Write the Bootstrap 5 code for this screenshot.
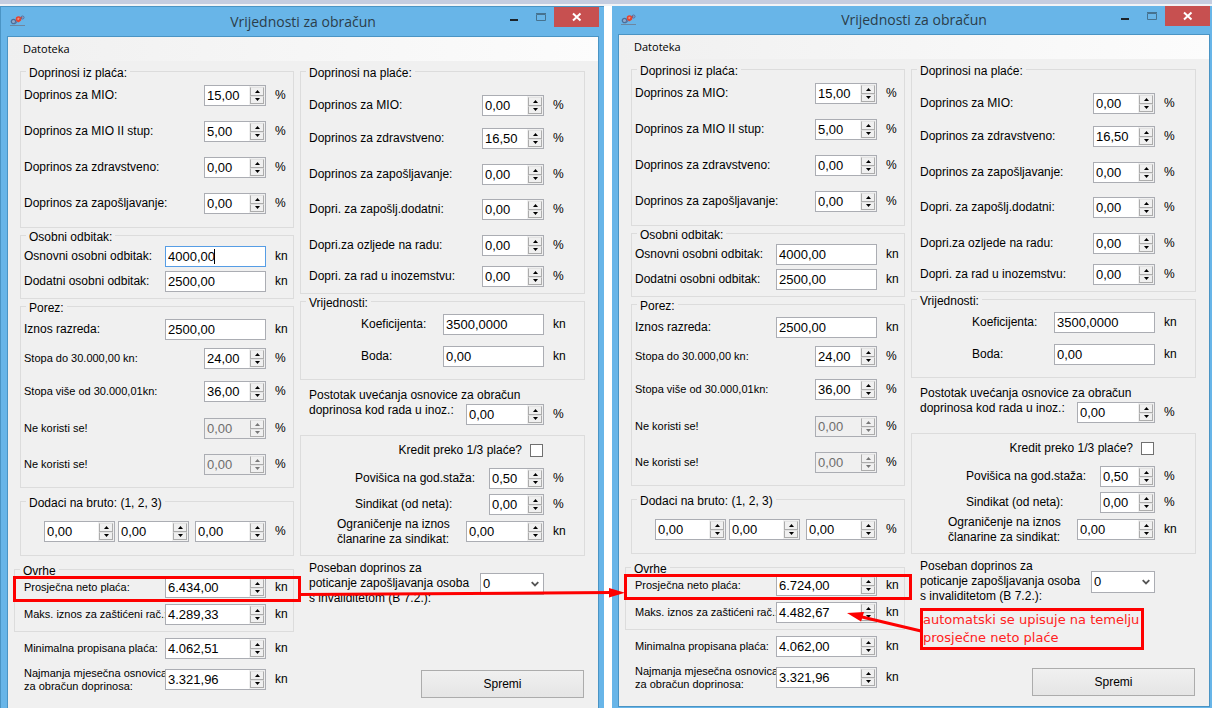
<!DOCTYPE html>
<html lang="hr">
<head>
<meta charset="utf-8">
<meta name="viewport" content="width=device-width, initial-scale=1">
<title>Vrijednosti za obračun</title>
<link href="https://cdn.jsdelivr.net/npm/bootstrap@5.3.0/dist/css/bootstrap.min.css" rel="stylesheet">
<style>
:root { --sky:#68b5e8; --edge:#4a94c4; --line:#dcdcdc; --face:#f0f0f0; --alert:#fe0000; }
body { background:#fff; color:#000; font:12px/15px "Liberation Sans", Arial, sans-serif; }
.topstrip { height:6px; background:#c5cde0; border-bottom:2px solid #f2f3f6; }
.desk { display:grid; grid-template-columns:604fr 600fr; column-gap:8px; align-items:start; }
.win { background:var(--sky); min-width:0; }
.win-a { padding:0 6px 0 8px; border-top:1px solid var(--edge); box-shadow:inset 1px 0 var(--edge); }
.win-b { padding:0 3px 2px 7px; }
.titlebar { height:29px; margin-bottom:1px; }
.win-b .titlebar { height:28px; }
.caption { font:14px/30px "Open Sans", "Noto Sans", sans-serif; color:#2b3d4a; }
.win-b .caption { line-height:28px; }
.appicon { left:2px; top:8px; }
.winbtns { right:-1px; top:0; }
.winbtns button { border:0; padding:0; height:20px; background:none; display:block; }
.winbtns .shut { width:45px; background:#c75050; }
.winbtns .tool { width:27px; }
.client { background:var(--face); outline:1px solid var(--edge); padding-bottom:10px; }
.menustrip { height:24px; background:linear-gradient(90deg,#f0f0f0,#fcfcfc); padding-left:15px; }
.menustrip a { font:11px/24px "Open Sans", "Noto Sans", sans-serif; color:#000; text-decoration:none; }
.panes { display:grid; grid-template-columns:274fr 285fr; column-gap:6px; padding:3px 13px 0 12px; }
.panes > div { min-width:0; }
fieldset.box { border:1px solid var(--line); min-width:0; }
fieldset.box > legend { float:none; width:auto; height:14px; margin:0 0 0 5px; padding:2px 3px 0; font-size:12px; line-height:14px; overflow:visible; white-space:nowrap; }
.field { display:flex; align-items:center; height:21px; padding-left:3px; white-space:nowrap; }
.wide { margin-left:-6px; }
.wide .field { padding-left:9px; }
.field.tall { align-items:flex-end; height:37px; }
.field.tri { height:45px; }
.field > label { flex:1 1 0; min-width:0; }
.tight { font-size:11px; line-height:13px; }
.tall > label { padding-bottom:7px; }
.unit { width:27px; padding-left:9px; flex:none; line-height:21px; }
.lhs > .field { padding-left:4px; }
.lhs > .field .unit { width:28px; }
.rhs .unit { width:40px; }
.rhs .field { padding-left:8px; }
.rhs > .field { padding-left:9px; }
.rhs > .field .unit { width:41px; }
.rhs .in1 { padding-left:28px; } .rhs .in2 { padding-left:46px; } .rhs .in3 { padding-left:52px; }
.ctl { height:21px; border:1px solid #abadb3; background:#fff; display:flex; flex:none; }
.ctl input { border:0; outline:0; background:none; padding:0 0 0 2px; color:#000; width:100%; min-width:0; font-size:13px; line-height:15px; }
.ctl.hot { border-color:#569de5; }
.ctl.hot input { background:linear-gradient(#000,#000) 48px 2px / 1px 15px no-repeat; }
.ctl.off { background:var(--face); }
.ctl.off input { color:#6d6d6d; }
.ctl.off svg { opacity:.5; }
.w55 { width:55px; } .w62 { width:62px; } .w71 { width:71px; } .w78 { width:78px; } .w101 { width:101px; }
.g3 { margin-right:3px; } .g6 { margin-right:6px; }
.spin { width:16px; flex:none; background:#f0f0f0; padding:1px; display:flex; flex-direction:column; }
.spin button { flex:1; border:1px solid #acacac; border-top-color:#e3e3e3; background:#f0f0f0; padding:0; display:flex; align-items:center; justify-content:center; min-height:0; }
.field select { width:64px; height:22px; border:1px solid #abadb3; border-radius:0; padding:0 2px; font-size:13px; color:#000; appearance:none; background:#fff url("data:image/svg+xml,%3Csvg xmlns='http://www.w3.org/2000/svg' width='8' height='6'%3E%3Cpath d='M.7 1.2 4 4.500 7.300 1.200' fill='none' stroke='%23555' stroke-width='1.800'/%3E%3C/svg%3E") right 4px center no-repeat; }
.field input[type=checkbox] { width:13px; height:13px; margin:0 1px 0 0; border:1px solid #707070; background:#fff; appearance:none; }
.t1{margin-top:1px}.t4{margin-top:4px}.t5{margin-top:5px}.t6{margin-top:6px}.t7{margin-top:7px}.t8{margin-top:8px}.t10{margin-top:10px}.t11{margin-top:11px}.t12{margin-top:12px}.t13{margin-top:13px}.t14{margin-top:14px}.t15{margin-top:15px}.t16{margin-top:16px}.t17{margin-top:17px}
.b6{padding-bottom:6px}.b12{padding-bottom:12px}.b13{padding-bottom:13px}
.save { width:163px; height:28px; margin:64px 1px 0 0; border:1px solid #acacac; border-radius:0; background:linear-gradient(#f0f0f0,#e5e5e5); color:#000; font-size:12px; padding:0; }
.marked { position:relative; }
.marked::after { content:""; position:absolute; inset:-1px -8px -4px -2px; border:3px solid var(--alert); pointer-events:none; }
.arrows { inset:0; width:100%; pointer-events:none; }
.callout { right:68px; top:608px; width:224px; border:3px solid var(--alert); background:var(--face); color:#f22; font:13px/18px "DejaVu Sans", Verdana, sans-serif; white-space:nowrap; }
</style>
</head>
<body>
<div class="position-relative overflow-hidden">
  <div class="topstrip"></div>
  <main class="desk" id="desk"></main>
  <p class="callout position-absolute mb-0">automatski se upisuje na temelju<br>prosječne neto plaće</p>
  <svg class="arrows position-absolute" viewBox="0 0 1212 708" aria-hidden="true">
    <path d="M301 594.500 612 592.500" stroke="#fe0000" stroke-width="3"/>
    <path d="M609 588v9.500l16-4.800z" fill="#fe0000"/>
    <path d="M860 616.500 921 631" stroke="#fe0000" stroke-width="3"/>
    <path d="M847 613l17-1-3 9.500z" fill="#fe0000"/>
  </svg>
</div>
<script src="https://cdn.jsdelivr.net/npm/bootstrap@5.3.0/dist/js/bootstrap.bundle.min.js"></script>
<script>
let n = 0;
const arrow = d => `<svg width="5" height="3" viewBox="0 0 5 3" aria-hidden="true"><path d="${d}"/></svg>`;
const spinner = off => `<span class="spin"><button type="button" tabindex="-1" aria-label="Više" ${off}>${arrow('M0 3h5L2.500 0z')}</button><button type="button" tabindex="-1" aria-label="Manje" ${off}>${arrow('M0 0h5L2.500 3z')}</button></span>`;
// o: w = width class, plain = no arrows, lab = label classes, unit, off, hot
function control(value, o, attrs) {
  const off = o.off ? 'disabled' : '';
  return `<span class="ctl ${o.w || 'w62'} ${off && 'off'} ${o.hot ? 'hot' : ''}"><input type="text" ${attrs} value="${value}" ${off}>${o.plain ? '' : spinner(off)}</span>`;
}
function field(label, value, cls, o = {}) {
  const id = 'f' + (++n);
  return `<div class="field ${cls}"><label for="${id}" class="${o.lab || ''}">${label}</label>${control(value, o, `id="${id}"`)}<span class="unit">${o.unit || '%'}</span></div>`;
}
const box = (title, body, cls = '') => `<fieldset class="box ${cls}">${title ? `<legend>${title}</legend>` : ''}${body}</fieldset>`;
const money = { w: 'w101', plain: true, unit: 'kn' };
const amount = { w: 'w101', unit: 'kn', lab: 'tight' };
const small = { lab: 'tight' };

function form(d) {
  const left =
    box('Doprinosi iz plaća:',
      field('Doprinos za MIO:', '15,00', 't7') + field('Doprinos za MIO II stup:', '5,00', 't15') +
      field('Doprinos za zdravstveno:', '0,00', 't15') + field('Doprinos za zapošljavanje:', '0,00', 't15'), 'b13') +
    box('Osobni odbitak:',
      field('Osnovni osobni odbitak:', '4000,00', 't4', { ...money, hot: d.hot }) +
      field('Dodatni osobni odbitak:', '2500,00', 't4', money), 'b6') +
    box('Porez:',
      field('Iznos razreda:', '2500,00', 't6', money) + field('Stopa do 30.000,00 kn:', '24,00', 't8', small) +
      field('Stopa više od 30.000,01kn:', '36,00', 't12', small) + field('Ne koristi se!', '0,00', 't16', { ...small, off: true }) +
      field('Ne koristi se!', '0,00', 't15', { ...small, off: true }), 'b12') +
    box('Dodaci na bruto: (1, 2, 3)',
      `<div class="field t13 justify-content-end">` +
      ['g3', 'g6', ''].map((g, i) => control('0,00', { w: 'w71 ' + g }, `aria-label="Dodatak ${i + 1}"`)).join('') +
      `<span class="unit">%</span></div>`, 't6 b13') +
    box('Ovrhe',
      field('Prosječna neto plaća:', d.avg, 't1 marked', amount) +
      field('Maks. iznos za zaštićeni rač.:', d.max, 't6', amount), 't6 wide b6') +
    field('Minimalna propisana plaća:', d.min, 't6', amount) +
    field('Najmanja mjesečna osnovica<br>za obračun doprinosa:', '3.321,96', 't10', amount);
  const right =
    box('Doprinosi na plaće:',
      field('Doprinos za MIO:', '0,00', 't17') + field('Doprinos za zdravstveno:', '16,50', 't12') +
      field('Doprinos za zapošljavanje:', '0,00', 't15') + field('Dopri. za zapošlj.dodatni:', '0,00', 't14') +
      field('Dopri.za ozljede na radu:', '0,00', 't15') + field('Dopri. za rad u inozemstvu:', '0,00', 't10'), 'b6') +
    box('Vrijednosti:',
      field('Koeficijenta:', '3500,0000', 't6', { ...money, lab: 'in3' }) +
      field('Boda:', '0,00', 't11', { ...money, lab: 'in3' }), 'b12') +
    field('Postotak uvećanja osnovice za obračun<br>doprinosa kod rada u inoz.:', '0,00', 'tall t8', { w: 'w78' }) +
    box('',
      `<div class="field t4"><label for="k${++n}" class="text-end pe-2">Kredit preko 1/3 plaće?</label><input type="checkbox" id="k${n}"><span class="unit"></span></div>` +
      field('Povišica na god.staža:', '0,50', 't7', { w: 'w55', lab: 'in2' }) +
      field('Sindikat (od neta):', '0,00', 't5', { w: 'w55', lab: 'in2' }) +
      field('Ograničenje na iznos<br>članarine za sindikat:', '0,00', 't6', { w: 'w78', lab: 'in1', unit: 'kn' }), 't10 b13') +
    `<div class="field tri t5"><label for="s${++n}">Poseban doprinos za<br>poticanje zapošljavanja osoba<br>s invaliditetom (B 7.2.):</label><select id="s${n}"><option>0</option></select><span class="unit"></span></div>` +
    `<div class="text-end"><button type="button" class="btn save">Spremi</button></div>`;
  return `<section class="win ${d.cls}">
  <header class="titlebar position-relative text-center">
    <svg class="appicon position-absolute" width="16" height="12" viewBox="0 0 16 12" aria-hidden="true">
      <circle cx="3.500" cy="6.500" r="2.200" fill="#8fa9cc" stroke="#4b6f9b" stroke-width="1.300"/><path d="M5 8.500 11 3" stroke="#5a78a8" stroke-width="1.500"/>
      <circle cx="8.500" cy="4" r="2" fill="#f0907f" stroke="#e8452f" stroke-width="1.600"/><path d="m8 7 4-5" stroke="#e8452f" stroke-width="1.500"/>
      <circle cx="12.500" cy="2.500" r="1.500" fill="none" stroke="#5c6c9a"/><path d="M0 10.500h15" stroke="#6d86a0"/></svg>
    <span class="caption">Vrijednosti za obračun</span>
    <div class="winbtns position-absolute d-flex">
      <button type="button" class="tool" aria-label="Smanji"><svg class="d-block" width="27" height="20"><path d="M10 12h8v2h-8z" fill="#1c2329"/></svg></button>
      <button type="button" class="tool" aria-label="Povećaj"><svg class="d-block" width="27" height="20"><path d="M9.500 7.500h9v6h-9zM9 6.500h10" fill="none" stroke="#46728f"/></svg></button>
      <button type="button" class="shut" aria-label="Zatvori"><svg class="d-block" width="45" height="20"><path d="m19 6.500 7.500 7m0-7-7.500 7" stroke="#fff" stroke-width="2"/></svg></button>
    </div>
  </header>
  <form class="client">
    <nav class="menustrip"><a href="#">Datoteka</a></nav>
    <div class="panes"><div class="lhs">${left}</div><div class="rhs">${right}</div></div>
  </form></section>`;
}
document.getElementById('desk').innerHTML =
  form({ cls: 'win-a', hot: true, avg: '6.434,00', max: '4.289,33', min: '4.062,51' }) +
  form({ cls: 'win-b', avg: '6.724,00', max: '4.482,67', min: '4.062,00' });
</script>
</body>
</html>
